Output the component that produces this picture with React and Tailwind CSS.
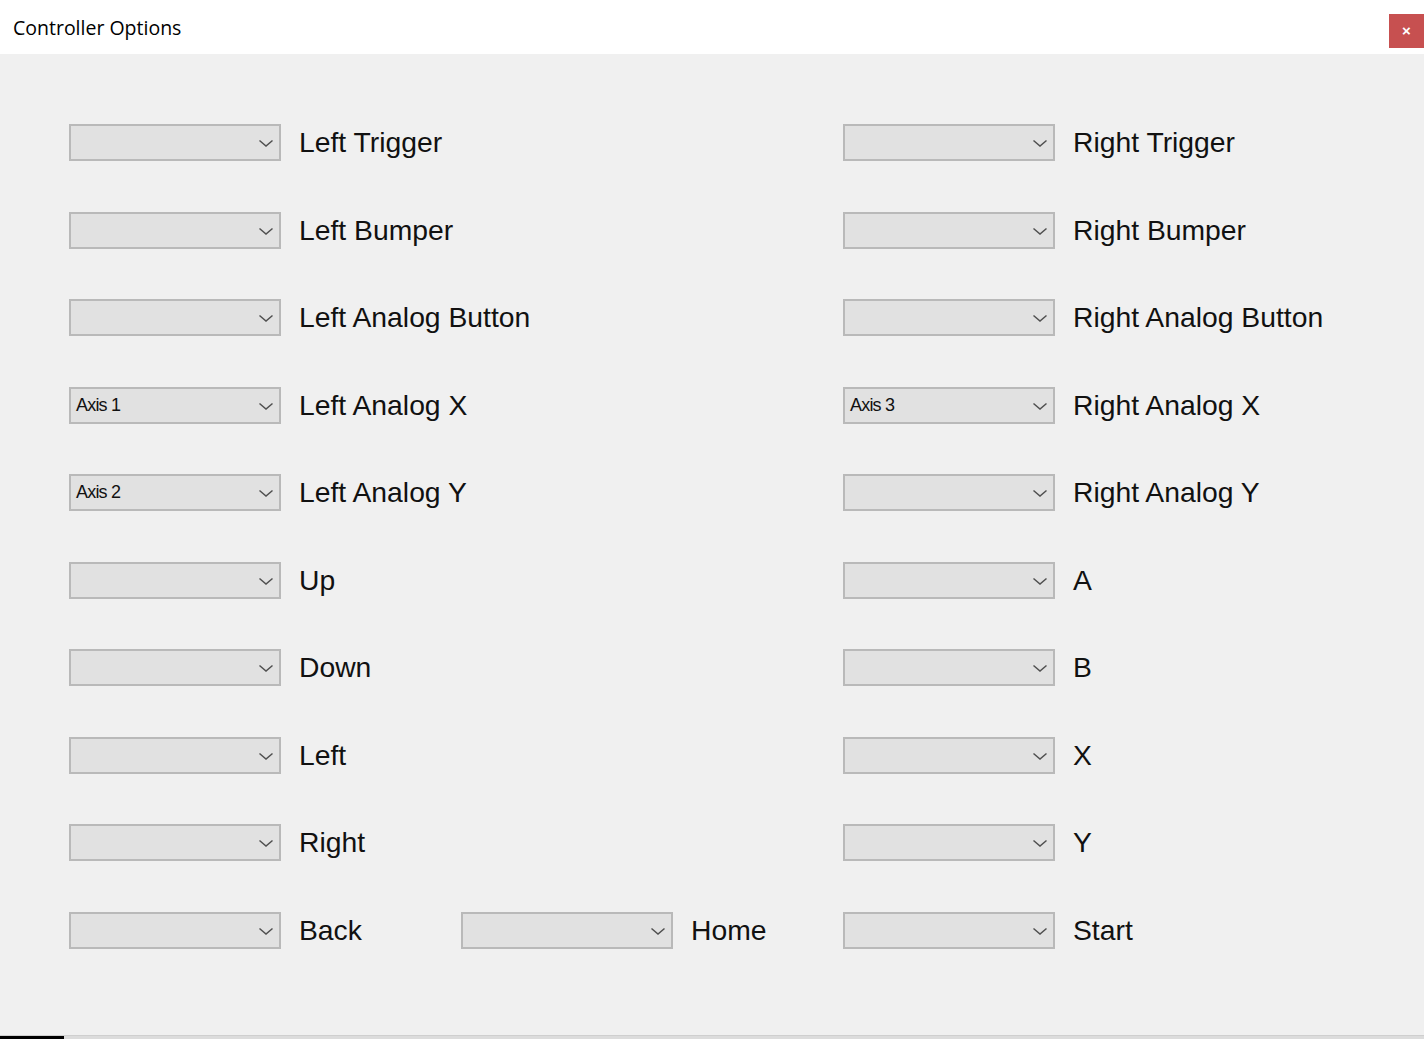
import React from 'react';

const LEFT = [
    ['', 'Left Trigger'],
    ['', 'Left Bumper'],
    ['', 'Left Analog Button'],
    ['Axis 1', 'Left Analog X'],
    ['Axis 2', 'Left Analog Y'],
    ['', 'Up'],
    ['', 'Down'],
    ['', 'Left'],
    ['', 'Right'],
];

const RIGHT = [
    ['', 'Right Trigger'],
    ['', 'Right Bumper'],
    ['', 'Right Analog Button'],
    ['Axis 3', 'Right Analog X'],
    ['', 'Right Analog Y'],
    ['', 'A'],
    ['', 'B'],
    ['', 'X'],
    ['', 'Y'],
];

function Chevron() {
    return (
        <svg width="16" height="9" viewBox="0 0 16 9" className="absolute right-[5px] top-[13px]">
            <path d="M1.5 1.5 L8 7 L14.5 1.5" fill="none" stroke="#505050" strokeWidth="1.5" />
        </svg>
    );
}

function Combo({ value }) {
    return (
        <div className="relative w-[212px] h-[37px] bg-[#e1e1e1] border-2 border-[#b9b9b9] flex items-center pl-[5px] shrink-0">
            <span className="text-[18px] text-[#111] tracking-[-0.8px] font-['Liberation_Sans',Arial,sans-serif]">{value}</span>
            <Chevron />
        </div>
    );
}

function Field({ value, label, width }) {
    return (
        <div className={`flex items-center ${width}`}>
            <Combo value={value} />
            <span className="ml-[18px] text-[28.3px] text-[#111] font-['Liberation_Sans',Arial,sans-serif] leading-none whitespace-nowrap">{label}</span>
        </div>
    );
}

export default function App() {
    return (
        <div className="w-[1424px] h-[1039px] flex flex-col bg-[#f0f0f0] overflow-hidden">
            {/* title bar */}
            <div className="h-[54px] bg-white flex items-start justify-between shrink-0">
                <span className="mt-[14px] ml-[13px] text-[19.5px] text-black font-['Open_Sans','Noto_Sans',sans-serif] leading-[28px]">Controller Options</span>
                <button className="mt-[14px] w-[35px] h-[34px] bg-[#c75050] text-white flex items-center justify-center text-[15px] font-bold font-['Liberation_Sans',Arial,sans-serif]">×</button>
            </div>

            {/* body */}
            <div className="flex-1 pt-[70px] pl-[69px] flex flex-col gap-[50.5px]">
                {LEFT.map((l, i) => (
                    <div key={l[1]} className="flex">
                        <Field value={l[0]} label={l[1]} width="w-[774px]" />
                        <Field value={RIGHT[i][0]} label={RIGHT[i][1]} />
                    </div>
                ))}
                <div className="flex">
                    <Field value="" label="Back" width="w-[392px]" />
                    <Field value="" label="Home" width="w-[382px]" />
                    <Field value="" label="Start" />
                </div>
            </div>

            {/* underlying window edge */}
            <div className="h-[4px] flex border-t border-[#cfcfcf] bg-[#dcdcdc] shrink-0">
                <div className="w-[64px] bg-black" />
            </div>
        </div>
    );
}
